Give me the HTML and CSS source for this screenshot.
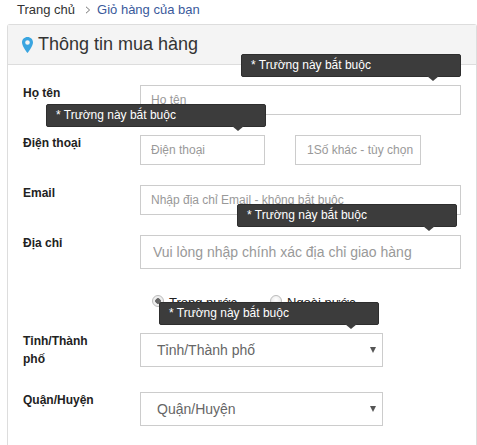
FILE: index.html
```html
<!DOCTYPE html>
<html lang="vi">
<head>
  <meta charset="UTF-8">
  <meta name="viewport" content="width=device-width, initial-scale=1.0">
  <title>Thông tin mua hàng</title>
  <link rel="stylesheet" href="styles.css">
</head>
<body>
  <div class="crumbs">
    <a class="crumb-home" href="#">Trang chủ</a>
    <svg class="crumb-sep" width="6" height="8" viewBox="0 0 6 8"><path d="M1 .8 4.600 4 1 7.200" fill="none" stroke="#777" stroke-width="1"/></svg>
    <a class="crumb-now" href="#">Giỏ hàng của bạn</a>
  </div>

  <div class="panel">
    <div class="panel-head">
      <svg class="pin" width="11" height="16" viewBox="0 0 11 16"><path fill-rule="evenodd" fill="#3aa5e0" d="M5.500 0C2.400 0 0 2.400 0 5.400 0 9 5.500 16 5.500 16S11 9 11 5.400C11 2.400 8.600 0 5.500 0Zm0 3.200a2.300 2.300 0 1 1 0 4.600 2.300 2.300 0 0 1 0-4.600Z"/></svg>
      <h2>Thông tin mua hàng</h2>
    </div>

    <form class="form">
      <div class="row row-name">
        <label>Họ tên</label>
        <div class="control">
          <div class="tip tip-name">* Trường này bắt buộc</div>
          <input class="input" type="text" placeholder="Họ tên">
        </div>
      </div>

      <div class="row row-phone">
        <label>Điện thoại</label>
        <div class="control phones">
          <div class="tip tip-phone">* Trường này bắt buộc</div>
          <input class="input phone" type="text" placeholder="Điện thoại">
          <input class="input phone phone-2" type="text" placeholder="1Số khác - tùy chọn">
        </div>
      </div>

      <div class="row row-email">
        <label>Email</label>
        <div class="control">
          <input class="input" type="text" placeholder="Nhập địa chỉ Email - không bắt buộc">
        </div>
      </div>

      <div class="row row-address">
        <label>Địa chỉ</label>
        <div class="control">
          <div class="tip tip-address">* Trường này bắt buộc</div>
          <input class="input input-big" type="text" placeholder="Vui lòng nhập chính xác địa chỉ giao hàng">
        </div>
      </div>

      <div class="radios">
        <label class="radio"><input type="radio" name="area" checked><span>Trong nước</span></label>
        <label class="radio"><input type="radio" name="area"><span>Ngoài nước</span></label>
      </div>

      <div class="row row-city">
        <label>Tỉnh/Thành phố</label>
        <div class="control control-select">
          <div class="tip tip-city">* Trường này bắt buộc</div>
          <select class="select"><option>Tỉnh/Thành phố</option></select>
        </div>
      </div>

      <div class="row row-district">
        <label>Quận/Huyện</label>
        <div class="control control-select">
          <select class="select"><option>Quận/Huyện</option></select>
        </div>
      </div>
    </form>
  </div>
</body>
</html>
```

FILE: styles.css
```css
* {
  box-sizing: border-box;
  margin: 0;
  padding: 0;
}

html, body {
  height: 445px;
  overflow: hidden;
}

body {
  background: #fff;
  font-family: "Liberation Sans", Arial, sans-serif;
  color: #222;
}

a {
  text-decoration: none;
}

.crumbs {
  display: flex;
  align-items: center;
  height: 24px;
  padding: 0 0 6px 17px;
  font-size: 13px;
}
.crumb-home { color: #333; }
.crumb-now { color: #3a5a9b; }
.crumb-sep { margin: 1px 6px 0 10px; }

.panel {
  margin-left: 7px;
  height: 421px;
  border: 1px solid #ddd;
  border-bottom: 0;
  border-radius: 3px 3px 0 0;
}

.panel-head {
  display: flex;
  align-items: center;
  height: 40px;
  padding-left: 14px;
  background: #f4f4f4;
  border-bottom: 1px solid #ddd;
}
.panel-head h2 {
  margin-left: 5px;
  font-size: 18px;
  font-weight: normal;
  color: #333;
}

.form {
  padding: 20px 15px 0 15px;
}

.row {
  display: flex;
  margin-bottom: 20px;
}
.row > label {
  flex: 0 0 117px;
  margin-top: -1px;
  padding-right: 30px;
  font-size: 12px;
  font-weight: bold;
  line-height: 18px;
  color: #222;
}

.control {
  position: relative;
  flex: 1;
}

.input {
  display: block;
  width: 100%;
  height: 30px;
  padding: 0 10px;
  border: 1px solid #ccc;
  background: #fff;
  font-family: inherit;
  font-size: 12px;
  color: #333;
}
.input::placeholder {
  color: #999;
  opacity: 1;
}
.input-big {
  height: 34px;
  padding: 0 12px;
  font-size: 14px;
}

.phones {
  display: flex;
  justify-content: space-between;
}
.phone {
  width: 125px;
}
.phone-2 {
  width: 126px;
  margin-right: 40px;
  padding: 0 0 0 11px;
}

.radios {
  display: flex;
  height: 44px;
  margin-left: 129px;
  padding-top: 6px;
}
.radio {
  display: flex;
  width: 118px;
  height: 16px;
  font-size: 13px;
  line-height: 16px;
  color: #222;
}
.radio input {
  appearance: none;
  width: 12px;
  height: 12px;
  margin-right: 5px;
  border: 1px solid #bbb;
  border-radius: 50%;
  background: radial-gradient(circle at 50% 35%, #fff, #ddd);
}
.radio input:checked {
  background: radial-gradient(circle, #666 0 2.5px, #eee 3px);
}

.control-select {
  flex: 0 0 243px;
}
.control-select::after {
  content: "";
  position: absolute;
  right: 7px;
  top: 14px;
  border: 3.5px solid transparent;
  border-top: 6px solid #555;
  border-bottom: 0;
}
.select {
  display: block;
  width: 100%;
  height: 34px;
  padding: 0 16px;
  border: 1px solid #ccc;
  border-radius: 0;
  background: #fff;
  appearance: none;
  font-family: inherit;
  font-size: 14px;
  color: #666;
}
.row-city {
  margin-bottom: 24px;
}

/* validation tips sit on top of the field */
.tip {
  position: absolute;
  z-index: 2;
  bottom: calc(100% + 8px);
  width: 220px;
  height: 23px;
  padding-left: 9px;
  background: #3c3c3c;
  border: 1px solid #2e2e2e;
  border-radius: 2px;
  color: #fff;
  font-size: 12px;
  line-height: 20px;
  white-space: nowrap;
}
.tip::after {
  content: "";
  position: absolute;
  right: 21px;
  top: 100%;
  border: 6px solid transparent;
  border-top: 5px solid #3c3c3c;
  border-bottom: 0;
}
.tip-name { right: 0; }
.tip-phone { right: 195px; }
.tip-address { right: 4px; }
.tip-city { right: 4px; }
```
